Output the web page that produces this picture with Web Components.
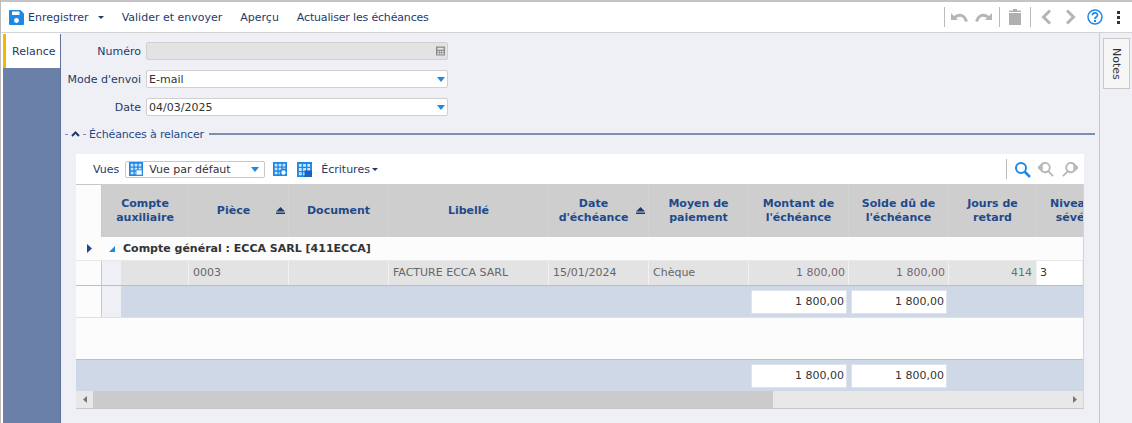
<!DOCTYPE html>
<html lang="fr">
<head>
<meta charset="utf-8">
<title>Relance</title>
<style>
  html, body { margin: 0; height: 423px; overflow: hidden; background: #fff; }
  body { font: 11px "DejaVu Sans", sans-serif; color: #333; }
  #page { display: flex; flex-direction: column; height: 423px; padding-left: 2px; box-sizing: border-box; border-left: 1px solid #bbb; }
  #body { display: flex; flex: 1; min-height: 0; }
</style>
</head>
<body>
<div id="page">
  <app-toolbar></app-toolbar>
  <div id="body">
    <side-nav></side-nav>
    <main-panel></main-panel>
    <notes-rail></notes-rail>
  </div>
</div>

<script>
class AppToolbar extends HTMLElement {
  constructor() {
    super();
    this.attachShadow({mode: "open"});
  }
  connectedCallback() {
    this.shadowRoot.innerHTML = `
    <style>
      :host { display: flex; align-items: center; height: 30px; margin-left: -2px; padding-left: 8px; background: #fff; border-top: 2px solid #c4c4c4; border-bottom: 1px solid #d4d4d4; font: 11px "DejaVu Sans", sans-serif; color: #1f3a68; }
      .save { display: flex; align-items: center; gap: 4px; }
      .caret { width: 0; height: 0; border: 3px solid transparent; border-top: 3px solid #1f3a68; border-bottom: 0; margin-left: 5px; margin-right: 18px; }
      .item { margin-left: 18px; white-space: nowrap; }
      .item.first { margin-left: 0; }
      .right { margin-left: auto; display: flex; align-items: center; height: 100%; }
      .sep { width: 1px; height: 20px; background: #bcbcbc; }
      svg { display: block; flex: none; }
    </style>
    <div class="save">
      <svg width="15" height="15" viewBox="0 0 15 15"><path d="M1 0h10.500L15 3.500V14a1 1 0 0 1-1 1H1a1 1 0 0 1-1-1V1a1 1 0 0 1 1-1z" fill="#1e88e5"/><rect x="3" y="1.500" width="7.500" height="3.500" fill="#fff"/><circle cx="7.500" cy="10.500" r="2.400" fill="#fff"/></svg>
      <span>Enregistrer</span>
      <span class="caret" style="margin-left:5px"></span>
    </div>
    <span class="item first">Valider et envoyer</span>
    <span class="item">Aperçu</span>
    <span class="item" style="letter-spacing:-0.17px">Actualiser les échéances</span>
    <div class="right">
      <span class="sep"></span>
      <svg style="margin-left:6px" width="17" height="11" viewBox="0 0 17 11"><path d="M0 1l7 7H0z" fill="#b5b5b5"/><path d="M3.500 5.500C7 2 13 2 15.500 9.500" fill="none" stroke="#b5b5b5" stroke-width="3"/></svg>
      <svg style="margin-left:7px" width="17" height="11" viewBox="0 0 17 11"><path d="M17 1l-7 7h7z" fill="#b5b5b5"/><path d="M13.500 5.500C10 2 4 2 1.500 9.500" fill="none" stroke="#b5b5b5" stroke-width="3"/></svg>
      <span class="sep" style="margin-left:7px"></span>
      <svg style="margin-left:9px" width="12" height="16" viewBox="0 0 12 16"><path d="M0 1.500h4V0h4v1.500h4V3H0z" fill="#b0b0b0"/><path d="M0 4h12v12H0z" fill="#b0b0b0"/></svg>
      <span class="sep" style="margin-left:9px"></span>
      <svg style="margin-left:10px" width="11" height="16" viewBox="0 0 11 16"><path d="M9 1.500L2.500 8 9 14.500" fill="none" stroke="#b5b5b5" stroke-width="3"/></svg>
      <svg style="margin-left:13px" width="11" height="16" viewBox="0 0 11 16"><path d="M2 1.500L8.500 8 2 14.500" fill="none" stroke="#b5b5b5" stroke-width="3"/></svg>
      <svg style="margin-left:11px" width="16" height="16" viewBox="0 0 16 16"><circle cx="8" cy="8" r="7" fill="none" stroke="#1e88e5" stroke-width="1.500"/><path d="M5.500 6.200C5.500 3.200 10.500 3.200 10.500 6c0 2-2.500 2-2.500 4" fill="none" stroke="#1e88e5" stroke-width="1.700"/><rect x="7" y="11" width="2" height="2" fill="#1e88e5"/></svg>
      <svg style="margin-left:14px;margin-right:12px" width="3" height="13" viewBox="0 0 3 13"><path d="M0 0h3v3H0zM0 5h3v3H0zM0 10h3v3H0z" fill="#333"/></svg>
    </div>`;
  }
}

class SideNav extends HTMLElement {
  constructor() {
    super();
    this.attachShadow({mode: "open"});
  }
  connectedCallback() {
    this.shadowRoot.innerHTML = `
    <style>
      :host { display: block; width: 57px; background: #6b80a9; border-right: 1px solid #5c6f96; flex: none; margin-top: 1px; }
      .tab { height: 34px; box-sizing: border-box; background: #fff; border-left: 3px solid #f5b800; padding-left: 6px; color: #1f3a68; font: 11px/36px "DejaVu Sans", sans-serif; }
    </style>
    <div class="tab">Relance</div>`;
  }
}

class FormField extends HTMLElement {
  constructor() {
    super();
    this.attachShadow({mode: "open"});
  }
  connectedCallback() {
    const kind = this.getAttribute("kind");
    let icon = `<svg width="8" height="5" viewBox="0 0 8 5"><path d="M0 0h8L4 5z" fill="#1e88e5"/></svg>`;
    if (kind == "calc") {
      icon = `<svg width="9" height="10" viewBox="0 0 10 10"><path d="M0 0h10v10H0z" fill="#8a8a8a"/><path d="M1.500 1.500h7v2h-7zM1.500 5h2v1.500h-2zM4.200 5h1.600v1.500H4.200zM6.500 5h2v1.500h-2zM1.500 7.300h2v1.500h-2zM4.200 7.300h1.600v1.500H4.200zM6.500 7.300h2v1.500h-2z" fill="#e3e3e3"/></svg>`;
    }
    this.shadowRoot.innerHTML = `
    <style>
      :host { display: flex; align-items: center; gap: 5px; height: 18px; }
      .lab { width: 74px; text-align: right; white-space: nowrap; color: #1f3a68; font-size: 11px; }
      .box { display: flex; align-items: center; justify-content: space-between; box-sizing: border-box; width: 302px; height: 18px; padding: 0 2px 0 2px; background: #fff; border: 1px solid #d0d0d0; border-radius: 2px; color: #333; font-size: 11px; }
      .box.off { background: #e3e3e3; }
    </style>
    <span class="lab">${this.getAttribute("label")}</span>
    <div class="box ${kind == "calc" ? "off" : ""}"><span>${this.getAttribute("value") || ""}</span>${icon}</div>`;
  }
}

class SectionTitle extends HTMLElement {
  constructor() {
    super();
    this.attachShadow({mode: "open"});
  }
  connectedCallback() {
    this.shadowRoot.innerHTML = `
    <style>
      :host { display: flex; align-items: center; height: 16px; color: #1f4a8a; font-size: 11px; letter-spacing: -0.15px; }
      .dash { width: 3px; height: 1px; background: #7d8fb3; }
      svg { margin: 0 3px; }
      .line { flex: 1; height: 2px; background: #7d8fb3; margin-left: 5px; }
    </style>
    <span class="dash"></span>
    <svg width="9" height="6" viewBox="0 0 9 6"><path d="M1 5l3.500-3.500L8 5" fill="none" stroke="#1f3a68" stroke-width="2"/></svg>
    <span class="dash"></span>
    <span style="margin-left:3px"><slot></slot></span>
    <span class="line"></span>`;
  }
}

class GridToolbar extends HTMLElement {
  constructor() {
    super();
    this.attachShadow({mode: "open"});
  }
  connectedCallback() {
    const tiles = `<path d="M0 0h16v16H0z" fill="#1e88e5"/><path d="M2 2h3v3H2zM6.500 2h3v3h-3zM11 2h3v3h-3zM2 6.500h3v3H2zM6.500 6.500h3v3h-3zM11 6.500h3v3h-3zM2 11h3v3H2zM6.500 11h3v3h-3zM11 11h3v3h-3z" fill="#cfe5fa"/>`;
    this.shadowRoot.innerHTML = `
    <style>
      :host { display: flex; align-items: center; height: 30px; padding-left: 17px; background: #fff; color: #1f3a68; font-size: 11px; }
      .sel { display: flex; align-items: center; box-sizing: border-box; width: 140px; height: 17px; margin-left: 6px; padding: 0 3px; border: 1px solid #c8c8c8; border-radius: 2px; gap: 6px; color: #333; }
      .sel svg.c { margin-left: auto; margin-right: 2px; }
      .caret { width: 0; height: 0; border: 3px solid transparent; border-top: 3px solid #1f3a68; border-bottom: 0; margin-left: 2px; }
      .tools { margin-left: auto; display: flex; align-items: center; height: 100%; }
      .sep { width: 1px; height: 20px; background: #bcbcbc; }
      svg { display: block; flex: none; }
    </style>
    <span>Vues</span>
    <div class="sel">
      <svg width="14" height="14" viewBox="0 0 16 16">${tiles}<rect x="8" y="9" width="7" height="6" fill="#fff" stroke="#1e88e5"/></svg>
      <span>Vue par défaut</span>
      <svg class="c" width="8" height="5" viewBox="0 0 8 5"><path d="M0 0h8L4 5z" fill="#1e88e5"/></svg>
    </div>
    <svg style="margin-left:8px" width="14" height="14" viewBox="0 0 16 16">${tiles}<circle cx="12" cy="12" r="3.500" fill="#fff" stroke="#1e88e5" stroke-width="2"/></svg>
    <svg style="margin-left:10px" width="15" height="15" viewBox="0 0 16 16">${tiles}<path d="M8 9h8v7H8z" fill="#1565c0"/></svg>
    <span style="margin-left:9px">Écritures</span><span class="caret"></span>
    <div class="tools">
      <span class="sep"></span>
      <svg style="margin-left:7px" width="17" height="17" viewBox="0 0 17 17"><circle cx="7" cy="7" r="5" fill="none" stroke="#1e88e5" stroke-width="2"/><path d="M10.500 10.500L16 16" stroke="#1e88e5" stroke-width="2.500"/></svg>
      <svg style="margin-left:7px" width="16" height="16" viewBox="0 0 17 17"><path d="M3 5a5 5 0 1 1 0 4" fill="none" stroke="#b8b8b8" stroke-width="2"/><path d="M0 7l4-3v6zM11 11l5 5" stroke="#b8b8b8" stroke-width="2" fill="#b8b8b8"/></svg>
      <svg style="margin-left:8px;margin-right:6px" width="16" height="16" viewBox="0 0 17 17"><path d="M14 5a5 5 0 1 0 0 4" fill="none" stroke="#b8b8b8" stroke-width="2"/><path d="M17 7l-4-3v6zM6 11l-5 5" stroke="#b8b8b8" stroke-width="2" fill="#b8b8b8"/></svg>
    </div>`;
  }
}

class DataGrid extends HTMLElement {
  constructor() {
    super();
    this.attachShadow({mode: "open"});
  }
  connectedCallback() {
    const sort = (right) => `<svg style="position:absolute;right:${right}px;top:23px" width="9" height="7" viewBox="0 0 9 7"><path d="M4.500 0L9 4.500H0zM0 5.500h9V7H0z" fill="#1f3a68"/></svg>`;
    this.shadowRoot.innerHTML = `
    <style>
      :host { display: block; border-bottom: 1px solid #c8c8c8; border-right: 1px solid #d4d4d4; overflow: hidden; }
      .row { display: grid; grid-template-columns: 26px 19px 68px 100px 100px 160px 100px 100px 100px 100px 88px 46px; }
      .head { height: 53px; background: #cecece; }
      .head div { display: flex; align-items: center; justify-content: center; text-align: center; position: relative; color: #1f4a8a; font-weight: bold; font-size: 11px; line-height: 14px; white-space: nowrap; border-right: 1px solid #d2d2d2; box-sizing: border-box; overflow: hidden; }
      .head .corner { background: #fcfcfc; border-right: 1px solid #c8c8c8; border-top: 1px solid #c8c8c8; }
      .head .span2 { grid-column: span 2; }
      .head .sorted { padding-right: 10px; }
      .group { height: 23px; display: flex; align-items: center; background: #fcfcfc; font-weight: bold; color: #333; }
      .ind { box-sizing: border-box; width: 26px; height: 100%; display: flex; align-items: center; justify-content: center; background: #fcfcfc; }
      .data { height: 25px; border-top: 1px solid #e8e8e8; box-sizing: border-box; }
      .data > div { box-sizing: border-box; background: #e3e3e3; border-right: 1px solid #f2f2f2; padding: 0 4px; line-height: 24px; color: #666; white-space: nowrap; }
      .data .rowind, .sub .rowind { background: #fcfcfc; border-right: 1px solid #c8c8c8; }
      .data .indent, .sub .indent { background: #eff0f5; border: 0; }
      .data .r { text-align: right; padding-right: 3px; }
      .data .plain { background: #fff; color: #333; padding-left: 3px; }
      .sub { height: 33px; border-top: 1px solid #bdbdbd; border-bottom: 1px solid #e0e0e0; background: #cfd8e6; box-sizing: border-box; }
      .sub > div { display: flex; align-items: center; justify-content: center; }
      .val { flex: none; box-sizing: border-box; width: 96px; height: 24px; background: #fff; border: 1px solid #dfe4ec; text-align: right; padding-right: 2px; line-height: 22px; color: #333; }
      .empty { height: 41px; background: #fcfcfc; }
      .total { grid-template-columns: 673px 100px 100px 1fr; height: 32px; border-top: 1px solid #bdbdbd; box-sizing: border-box; background: #cfd8e6; }
      .total > div { display: flex; align-items: center; justify-content: center; }
      .scroll { display: flex; align-items: stretch; height: 17px; background: #e8e8e8; }
      .scroll .btn { width: 17px; display: flex; align-items: center; justify-content: center; flex: none; }
      .scroll .thumb { width: 680px; background: #cbcbcb; }
      .scroll .btn.end { margin-left: auto; }
    </style>
    <div class="row head">
      <div class="corner"></div>
      <div class="span2">Compte<br>auxiliaire</div>
      <div class="sorted">Pièce${sort(3)}</div>
      <div>Document</div>
      <div>Libellé</div>
      <div class="sorted">Date<br>d'échéance${sort(3)}</div>
      <div>Moyen de<br>paiement</div>
      <div>Montant de<br>l'échéance</div>
      <div>Solde dû de<br>l'échéance</div>
      <div>Jours de<br>retard</div>
      <div style="justify-content:flex-start;padding-left:13px;border:0">Niveau de<br>sévérité</div>
    </div>
    <div class="group">
      <span class="ind"><svg width="5" height="9" viewBox="0 0 5 9"><path d="M0 0l5 4.500L0 9z" fill="#1f4a8a"/></svg></span>
      <svg style="margin-left:7px;margin-right:8px" width="6" height="6" viewBox="0 0 6 6"><path d="M6 0v6H0z" fill="#1e88e5"/></svg>
      <span>Compte général : ECCA SARL [411ECCA]</span>
    </div>
    <div class="row data">
      <div class="rowind"></div><div class="indent"></div>
      <div></div><div>0003</div><div></div><div>FACTURE ECCA SARL</div><div>15/01/2024</div><div>Chèque</div>
      <div class="r" style="color:#7a6670">1 800,00</div><div class="r" style="color:#7a6670">1 800,00</div><div class="r" style="color:#5f7a5f;padding-right:4px">414</div><div class="plain">3</div>
    </div>
    <div class="row sub">
      <div class="rowind"></div><div class="indent"></div>
      <div></div><div></div><div></div><div></div><div></div><div></div>
      <div><span class="val">1 800,00</span></div><div><span class="val">1 800,00</span></div><div></div><div></div>
    </div>
    <div class="empty"></div>
    <div class="row total">
      <div></div>
      <div><span class="val">1 800,00</span></div><div><span class="val">1 800,00</span></div><div></div>
    </div>
    <div class="scroll">
      <span class="btn"><svg width="4" height="7" viewBox="0 0 4 7"><path d="M4 0v7L0 3.500z" fill="#777"/></svg></span>
      <span class="thumb"></span>
      <span class="btn end"><svg width="4" height="7" viewBox="0 0 4 7"><path d="M0 0v7l4-3.500z" fill="#777"/></svg></span>
    </div>`;
  }
}

class MainPanel extends HTMLElement {
  constructor() {
    super();
    this.attachShadow({mode: "open"});
  }
  connectedCallback() {
    this.shadowRoot.innerHTML = `
    <style>
      :host { display: block; flex: 1; min-width: 0; background: #eff0f5; padding-top: 9px; box-sizing: border-box; }
      .form { display: flex; flex-direction: column; gap: 10px; margin-left: 6px; }
      section-title { margin: 10px 4px 0 4px; }
      .card { margin: 12px 15px 0 15px; }
    </style>
    <div class="form">
      <form-field label="Numéro" kind="calc"></form-field>
      <form-field label="Mode d'envoi" value="E-mail"></form-field>
      <form-field label="Date" value="04/03/2025"></form-field>
    </div>
    <section-title>Échéances à relancer</section-title>
    <div class="card">
      <grid-toolbar></grid-toolbar>
      <data-grid></data-grid>
    </div>`;
  }
}

class NotesRail extends HTMLElement {
  constructor() {
    super();
    this.attachShadow({mode: "open"});
  }
  connectedCallback() {
    this.shadowRoot.innerHTML = `
    <style>
      :host { display: block; width: 33px; flex: none; box-sizing: border-box; background: #eff0f5; border-left: 1px solid #c8c8c8; padding: 5px 2px 0 3px; }
      .tab { box-sizing: border-box; width: 27px; height: 51px; background: #f6f6f6; border: 1px solid #c8c8c8; display: flex; align-items: center; justify-content: center; writing-mode: vertical-rl; color: #333; font-size: 11px; }
    </style>
    <div class="tab">Notes</div>`;
  }
}

customElements.define("app-toolbar", AppToolbar);
customElements.define("side-nav", SideNav);
customElements.define("form-field", FormField);
customElements.define("section-title", SectionTitle);
customElements.define("grid-toolbar", GridToolbar);
customElements.define("data-grid", DataGrid);
customElements.define("main-panel", MainPanel);
customElements.define("notes-rail", NotesRail);
</script>
</body>
</html>
